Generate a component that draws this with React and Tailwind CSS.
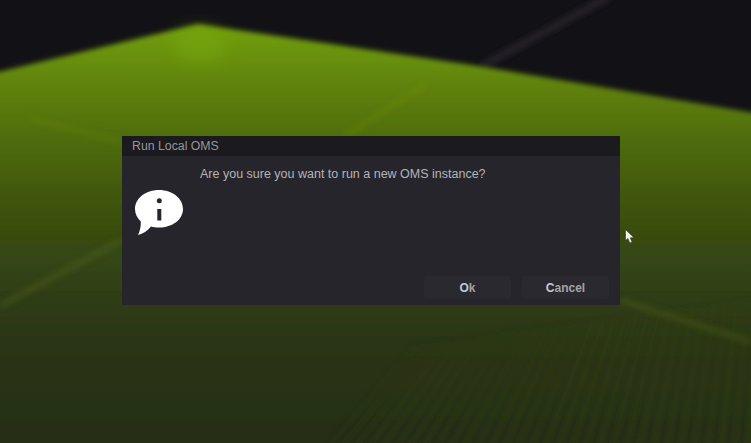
import React from 'react';

const font = { fontFamily: '"Liberation Sans", Arial, sans-serif' };

// Blurred terrain behind the dialog
function Terrain() {
  const ridges = [];
  for (let i = 0; i < 32; i++) {
    const x = 330 + i * 13.5;
    const dx = 85 - i * 2.4;
    const top = 345 - i * 1.5;
    ridges.push(<line key={i} x1={x} y1={445} x2={x + dx} y2={top} stroke="#37441a" strokeWidth="4" opacity={0.15 + i * 0.01} />);
  }
  return (
    <svg className="absolute inset-0" width="751" height="443" viewBox="0 0 751 443">
      <defs>
        <linearGradient id="field" gradientUnits="userSpaceOnUse" x1="0" y1="24" x2="0" y2="443">
          <stop offset="0" stopColor="#72a00a" />
          <stop offset="0.18" stopColor="#5c7c0e" />
          <stop offset="0.265" stopColor="#506e10" />
          <stop offset="0.42" stopColor="#3f5510" />
          <stop offset="0.565" stopColor="#344612" />
          <stop offset="0.66" stopColor="#2e3c12" />
          <stop offset="0.8" stopColor="#2a3313" />
          <stop offset="1" stopColor="#262e12" />
        </linearGradient>
        <filter id="soft" x="-20%" y="-20%" width="140%" height="140%"><feGaussianBlur stdDeviation="3" /></filter>
        <filter id="softer" x="-20%" y="-20%" width="140%" height="140%"><feGaussianBlur stdDeviation="2.500" /></filter>
        <filter id="peakBlur" x="-50%" y="-50%" width="200%" height="200%"><feGaussianBlur stdDeviation="9" /></filter>
      </defs>
      <rect width="751" height="443" fill="#121216" />
      <line x1="482" y1="66" x2="610" y2="-4" stroke="#25242a" strokeWidth="7" filter="url(#soft)" />
      <polygon points="-10,74 198,24 478,66 761,114 761,453 -10,453" fill="url(#field)" filter="url(#softer)" />
      <ellipse cx="200" cy="46" rx="26" ry="16" fill="#7cae08" opacity="0.45" filter="url(#peakBlur)" />
      <g filter="url(#soft)">
        <line x1="30" y1="118" x2="122" y2="142" stroke="#6e8d14" strokeWidth="3" opacity="0.4" />
        <line x1="345" y1="136" x2="425" y2="85" stroke="#7b9414" strokeWidth="4" opacity="0.35" />
        <line x1="0" y1="306" x2="122" y2="240" stroke="#5e6a1e" strokeWidth="4" opacity="0.55" />
        <line x1="620" y1="300" x2="751" y2="342" stroke="#56631d" strokeWidth="4" opacity="0.6" />
      </g>
      <g filter="url(#softer)">{ridges}</g>
    </svg>
  );
}

function InfoBubble() {
  return (
    <svg width="48" height="45" viewBox="0 0 48 45">
      <path d="M24 0C37.500 0 48 8.500 48 19C48 29.500 37.500 37.500 24 37.500C21 37.500 18.500 37.200 16 36.500C12.500 40.500 8 44 3 45C4.800 41.500 6 37 5.800 31.500C2.200 28 0 24 0 19C0 8.500 10.500 0 24 0Z" fill="#fff" />
      <circle cx="24.300" cy="10.700" r="2.500" fill="#25252b" />
      <rect x="22.300" y="19" width="4" height="11.500" fill="#25252b" />
    </svg>
  );
}

function DialogButton({ lead, rest, className }) {
  return (
    <button className={`h-[23px] rounded-sm bg-[#29292f] text-[12px] font-bold text-[#a3a3a7] ${className}`}>
      <span className="text-[#c9c9cc]">{lead}</span>{rest}
    </button>
  );
}

export default function App() {
  return (
    <div className="relative w-[751px] h-[443px] overflow-hidden pt-[136px] pl-[122px]" style={font}>
      <Terrain />
      <div className="relative flex flex-col w-[498px] h-[169px] bg-[#25252b]">
        <div className="flex items-center h-[20px] pl-[10px] bg-[#1a1a1f] text-[12.300px] text-[#97979b]">Run Local OMS</div>
        <div className="flex flex-1 pl-[13px]">
          <div className="pt-[34px] w-[65px] shrink-0">
            <InfoBubble />
          </div>
          <p className="pt-[11px] text-[12.500px] leading-[14px] text-[#b4b4b8]">Are you sure you want to run a new OMS instance?</p>
        </div>
        <div className="flex justify-end gap-[11px] pr-[11px] pb-[6px]">
          <DialogButton lead="O" rest="k" className="w-[87px]" />
          <DialogButton lead="C" rest="ancel" className="w-[87px]" />
        </div>
      </div>
      {/* mouse pointer */}
      <svg className="absolute left-[625px] top-[229px]" width="10" height="15" viewBox="0 0 10 15">
        <path d="M0.500 0.500V11.500L3 9.500L4.800 14L7 13L5.200 8.800H9Z" fill="#f2f2ee" stroke="#20240f" strokeWidth="0.500" />
      </svg>
    </div>
  );
}
